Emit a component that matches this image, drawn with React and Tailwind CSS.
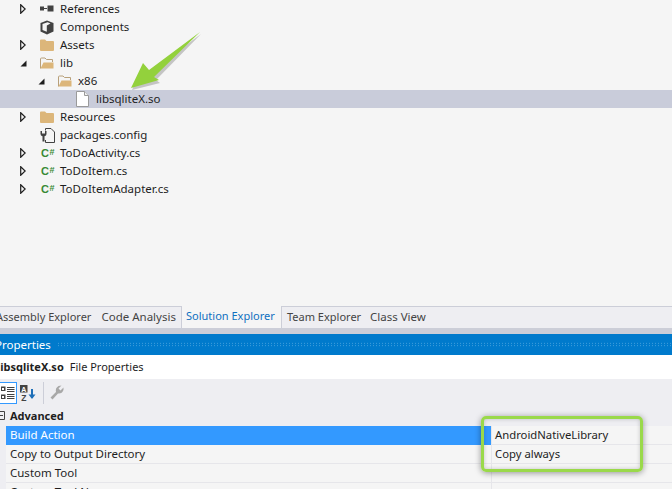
import React from "react";

function Expand({ open }) {
  if (open)
    return (
      <svg width="7" height="7" viewBox="0 0 7 7" className="block">
        <polygon points="6.5,0.5 6.5,6.5 0.5,6.5" fill="#1e1e1e" />
      </svg>
    );
  return (
    <svg width="6" height="10" viewBox="0 0 6 10" className="block">
      <polygon points="0.7,0.7 5.2,5 0.7,9.3" fill="#f5f5f5" stroke="#1e1e1e" strokeWidth="1.2" />
    </svg>
  );
}

function FolderClosed() {
  return (
    <svg width="14" height="12" viewBox="0 0 14 12" className="block">
      <path d="M0 1.5 Q0 0.5 1 0.5 H5 L6.5 2 H13 Q14 2 14 3 V11 Q14 12 13 12 H1 Q0 12 0 11 Z" fill="#dcb67a" />
    </svg>
  );
}

function FolderOpen() {
  return (
    <svg width="14" height="12" viewBox="0 0 14 12" className="block">
      <path d="M0.5 11.5 V2 Q0.5 1 1.5 1 H5 L6.5 2.5 H12.5 V5" fill="#f5f5f5" stroke="#b8a07a" strokeWidth="1" />
      <path d="M0.5 11.5 L3.5 5.5 H13.5 V11.5 Z" fill="#dcb67a" />
    </svg>
  );
}

function RefIcon() {
  return (
    <svg width="14" height="8" viewBox="0 0 14 8" className="block">
      <rect x="0" y="1.5" width="4" height="4" fill="#424242" />
      <rect x="4" y="3" width="3" height="1" fill="#424242" />
      <rect x="7.5" y="0.5" width="6" height="6" fill="#424242" />
    </svg>
  );
}

function ComponentIcon() {
  return (
    <svg width="14" height="15" viewBox="0 0 14 15" className="block">
      <path d="M7 0.5 L13.5 3 V11.5 L7 14.5 L0.5 11.5 V3 Z" fill="#424242" />
      <path d="M2.5 4 L7.5 2.3 L10.5 3.6 L6.8 5.5 V11.8 L2.5 10 Z" fill="#f5f5f5" />
    </svg>
  );
}

function FileIcon() {
  return (
    <svg width="13" height="16" viewBox="0 0 13 16" className="block">
      <path d="M0.5 0.5 H8.5 L12.5 4.5 V15.5 H0.5 Z" fill="#fff" stroke="#9a9a9a" />
      <path d="M8.5 0.5 V4.5 H12.5" fill="#f0f0f0" stroke="#9a9a9a" />
    </svg>
  );
}

function ConfigIcon() {
  return (
    <svg width="15" height="15" viewBox="0 0 15 15" className="block">
      <path d="M5.5 2.5 V0.5 H11 L14.5 4 V14.5 H5.5 V12" fill="#f5f5f5" stroke="#424242" />
      <path d="M0.5 3 V6 Q0.5 8 2.5 8.3 V13.5 H4.5 V8.3 Q6.5 8 6.5 6 V3 H5 V5.5 H2 V3 Z" fill="#424242" />
    </svg>
  );
}

function CSharpIcon() {
  return (
    <span className="ml-[1px] flex w-[13px] items-start font-['Liberation_Sans',sans-serif] text-[11px] leading-none font-bold whitespace-nowrap text-[#388a34]">
      C<span className="ml-[0.5px] text-[9px]">#</span>
    </span>
  );
}

function Row({ depth, expand, icon, label, selected }) {
  return (
    <div className={`flex h-[18px] items-center text-[#1e1e1e] ${selected ? "bg-[#c9ccda]" : ""}`}>
      <div className="flex shrink-0 items-center" style={{ marginLeft: depth * 18 }}>
        <div className="flex w-[40px] shrink-0 items-center justify-start pl-[20px]">
          {expand === "open" && <Expand open />}
          {expand === "closed" && <Expand />}
        </div>
        <div className="flex w-[20px] shrink-0 items-center justify-start">{icon}</div>
      </div>
      <span className="whitespace-nowrap">{label}</span>
    </div>
  );
}

function PropRow({ name, value, selected }) {
  return (
    <div className="flex h-[19px] pl-[6px]">
      <div
        className={`flex w-[485px] shrink-0 items-center border-b pl-[4px] ${
          selected ? "border-[#3399ff] bg-[#3399ff] text-white" : "border-[#e6e6ea] bg-[#f5f5f5] text-[#1e1e1e]"
        }`}
      >
        {name}
      </div>
      <div className="flex flex-1 items-center border-b border-l border-[#e6e6ea] bg-[#f5f5f5] pl-[3px] text-[11.3px] text-[#1e1e1e]">
        {value}
      </div>
    </div>
  );
}

export default function App() {
  return (
    <div className="relative flex h-[489px] w-[672px] flex-col overflow-hidden bg-[#f5f5f5] font-['Noto_Sans',sans-serif] text-[11.5px] leading-none">
      <div className="h-[306px] shrink-0">
        <Row depth={0} expand="closed" icon={<RefIcon />} label="References" />
        <Row depth={0} icon={<ComponentIcon />} label="Components" />
        <Row depth={0} expand="closed" icon={<FolderClosed />} label="Assets" />
        <Row depth={0} expand="open" icon={<FolderOpen />} label="lib" />
        <Row depth={1} expand="open" icon={<FolderOpen />} label="x86" />
        <Row depth={2} icon={<FileIcon />} label="libsqliteX.so" selected />
        <Row depth={0} expand="closed" icon={<FolderClosed />} label="Resources" />
        <Row depth={0} icon={<ConfigIcon />} label="packages.config" />
        <Row depth={0} expand="closed" icon={<CSharpIcon />} label="ToDoActivity.cs" />
        <Row depth={0} expand="closed" icon={<CSharpIcon />} label="ToDoItem.cs" />
        <Row depth={0} expand="closed" icon={<CSharpIcon />} label="ToDoItemAdapter.cs" />
      </div>

      <div className="flex h-[22px] shrink-0 bg-[#eeeef2]">
        <div className="flex w-[181px] shrink-0 items-center gap-[10px] border-t border-[#ccced8] pb-[2px] text-[#444]">
          <span className="ml-[-4px] text-[11px] whitespace-nowrap">Assembly Explorer</span>
          <span className="whitespace-nowrap">Code Analysis</span>
        </div>
        <div className="flex w-[100px] shrink-0 items-center border-l border-[#ccced8] bg-[#f5f5f5] pb-[3px] pl-[4px] text-[11px] text-[#0e70c0]">
          Solution Explorer
        </div>
        <div className="flex flex-1 items-center border-t border-l border-[#ccced8] pb-[2px] pl-[5px] text-[#444]">
          <span className="w-[83px] text-[11px]">Team Explorer</span>
          <span>Class View</span>
        </div>
      </div>
      <div className="h-[6px] shrink-0 bg-[#ccced8]" />

      <div className="flex h-[21px] shrink-0 items-center gap-[6px] bg-[#007acc] text-white">
        <span className="ml-[-5px]">Properties</span>
        <div className="h-[5px] flex-1 bg-[radial-gradient(#4fa6de_0.6px,transparent_0.7px)] bg-[length:3px_2.5px]" />
      </div>

      <div className="flex h-[24px] shrink-0 items-center bg-white pb-[1px] text-[11px] text-[#1e1e1e]">
        <span className="ml-[-3px] font-bold">libsqliteX.so</span>
        <span className="ml-[6px]">File Properties</span>
      </div>

      <div className="flex h-[27px] shrink-0 items-center bg-[#eeeef2]">
        <div className="flex h-[22px] w-[17px] items-center justify-center border border-l-0 border-[#3399ff] bg-white">
          <svg width="14" height="14" viewBox="0 0 14 14" className="block">
            <rect x="0" y="0.5" width="4.5" height="4.5" fill="#424242" />
            <rect x="1" y="2" width="2" height="2" fill="#fff" />
            <rect x="0" y="8.5" width="4.5" height="4.5" fill="#424242" />
            <rect x="1" y="10" width="2" height="2" fill="#fff" />
            <path d="M6 1.5H13.5M6 3.5H13.5M6 5.5H13.5M6 8.5H13.5M6 10.5H13.5M6 12.5H13.5" stroke="#424242" />
          </svg>
        </div>
        <div className="ml-[3px]">
          <svg width="16" height="16" viewBox="0 0 16 16" className="block">
            <rect x="0" y="0" width="7.5" height="7.5" fill="#424242" />
            <text x="3.8" y="6.5" fontSize="7" fontWeight="700" textAnchor="middle" fill="#fff" fontFamily="Liberation Sans">A</text>
            <text x="3.8" y="15.5" fontSize="8.5" fontWeight="700" textAnchor="middle" fill="#424242" fontFamily="Liberation Sans">Z</text>
            <path d="M12 4V13" stroke="#1e6fb8" strokeWidth="2" />
            <path d="M8.5 9.5H15.5L12 14Z" fill="#1e6fb8" />
          </svg>
        </div>
        <div className="ml-[7px] h-[22px] w-px bg-[#ccced8]" />
        <div className="ml-[6px]">
          <svg width="14" height="15" viewBox="0 0 14 15" className="block">
            <path d="M0.5 12.5 L6 7 Q5 3 8.5 1 L11.5 0.5 L8.5 3.5 L10.5 5.5 L13.5 2.5 L13.5 5 Q12 9 8 8.5 L2.5 14.5 Z" fill="#a8a8a8" />
          </svg>
        </div>
      </div>

      <div className="flex-1 bg-[#eeeef2]">
        <div className="flex h-[20px] items-center pb-[1px]">
          <svg width="6" height="9" viewBox="0 0 6 9" className="block shrink-0">
            <path d="M-1 0.5H4.5V8.5H-1M0 4.5H3" fill="none" stroke="#424242" />
          </svg>
          <span className="ml-[4px] text-[11px] font-bold text-[#1e1e1e]">Advanced</span>
        </div>
        <PropRow name="Build Action" value="AndroidNativeLibrary" selected />
        <PropRow name="Copy to Output Directory" value="Copy always" />
        <PropRow name="Custom Tool" value="" />
        <PropRow name="Custom Tool Namespace" value="" />
      </div>

      <svg width="90" height="70" viewBox="0 0 90 70" className="absolute left-[120px] top-[25px]">
        <polygon points="11,63 23,38 29,45 80,7 35,53 39,56" fill="#000" opacity="0.2" transform="translate(1,2)" />
        <polygon points="11,63 23,38 29,45 80,7 34,52 39,55" fill="#93d13c" />
      </svg>

      <div className="absolute left-[481px] top-[416px] h-[56px] w-[162px] rounded-[5px] border-[3px] border-[#9ad94a] shadow-[0_1px_6px_rgba(0,0,0,0.4),inset_0_0_4px_rgba(0,0,0,0.2)]" />
    </div>
  );
}
